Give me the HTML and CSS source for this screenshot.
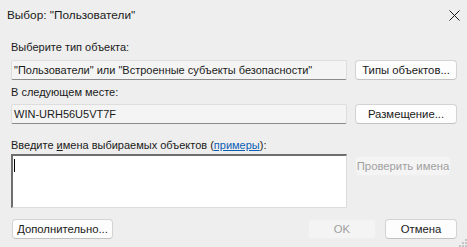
FILE: index.html
```html
<!DOCTYPE html>
<html lang="ru">
<head>
<meta charset="utf-8">
<title>Выбор: "Пользователи"</title>
<link rel="stylesheet" href="styles.css">
</head>
<body>
<div class="dialog">
  <div class="titlebar">
    <span class="title">Выбор: "Пользователи"</span>
    <svg class="close" width="11" height="11" viewBox="0 0 11 11"><path d="M0.5 0.5 L10.5 10.5 M10.5 0.5 L0.5 10.5" stroke="#1c1c1c" stroke-width="1" fill="none"/></svg>
  </div>
  <div class="content">
    <div class="label l1">Выберите тип объекта:</div>
    <div class="row r1">
      <div class="field">"Пользователи" или "Встроенные субъекты безопасности"</div>
      <button class="btn side">Типы объектов...</button>
    </div>
    <div class="label l2">В следующем месте:</div>
    <div class="row r2">
      <div class="field">WIN-URH56U5VT7F</div>
      <button class="btn side">Размещение...</button>
    </div>
    <div class="label l3">Введите <u>и</u>мена выбираемых объектов (<a class="link" href="#">примеры</a>):</div>
    <div class="row r3">
      <div class="textarea"><span class="caret"></span></div>
      <button class="btn side check disabled">Проверить имена</button>
    </div>
    <div class="footer">
      <button class="btn more">Дополнительно...</button>
      <div class="actions">
        <button class="btn ok disabled">OK</button>
        <button class="btn cancel">Отмена</button>
      </div>
    </div>
  </div>
  <svg class="grip" width="9" height="9" viewBox="0 0 9 9">
    <rect x="7" y="1" width="2" height="2" fill="#c4c4c4"/>
    <rect x="4" y="4" width="2" height="2" fill="#c4c4c4"/>
    <rect x="7" y="4" width="2" height="2" fill="#c4c4c4"/>
    <rect x="1" y="7" width="2" height="2" fill="#c4c4c4"/>
    <rect x="4" y="7" width="2" height="2" fill="#c4c4c4"/>
    <rect x="7" y="7" width="2" height="2" fill="#c4c4c4"/>
  </svg>
</div>
</body>
</html>
```
FILE: styles.css
```css
html, body {
  margin: 0;
  padding: 0;
  background: #eeeeee;
}
.dialog {
  position: relative;
  width: 467px;
  height: 247px;
  overflow: hidden;
  font-family: "Liberation Sans", Arial, sans-serif;
  color: #1a1a1a;
  display: flex;
  flex-direction: column;
}
.titlebar {
  height: 30px;
  display: flex;
  align-items: center;
  justify-content: space-between;
  padding: 0 7px 0 7px;
  box-sizing: border-box;
}
.title {
  font-size: 11.8px;
  color: #1a1a1a;
}
.close {
  display: block;
}
.content {
  padding: 0 10px 0 11px;
  display: flex;
  flex-direction: column;
}
.label {
  font-size: 11px;
  line-height: 14px;
  height: 14px;
  color: #1a1a1a;
  white-space: nowrap;
}
.l1 { margin-top: 10px; }
.l2 { margin-top: 5px; }
.l3 { margin-top: 14px; }
.row {
  display: flex;
  align-items: flex-start;
  gap: 8px;
}
.r1 { margin-top: 6px; }
.r2 { margin-top: 5px; }
.r3 { margin-top: 2px; }
.field {
  width: 336px;
  flex: none;
  height: 20px;
  box-sizing: border-box;
  background: #f4f4f4;
  border: 1px solid #dddddd;
  border-bottom-color: #8a8a8a;
  border-radius: 2px;
  font-size: 11px;
  line-height: 18px;
  padding-left: 2px;
  white-space: nowrap;
  overflow: hidden;
  color: #1a1a1a;
}
.btn {
  font-family: "Liberation Sans", Arial, sans-serif;
  font-size: 11.3px;
  color: #1a1a1a;
  background: #fdfdfd;
  border: 1px solid #d3d3d3;
  border-bottom-color: #c2c2c2;
  border-radius: 4px;
  height: 20px;
  box-sizing: border-box;
  padding: 0;
  margin: 0;
  white-space: nowrap;
}
.side {
  width: 102px;
  flex: none;
}
.btn.disabled {
  background: #f4f4f4;
  border-color: #efefef;
  color: #a0a0a0;
}
.r3 .check {
  margin-top: 2px;
  width: 96px;
}
.textarea {
  width: 336px;
  flex: none;
  height: 54px;
  box-sizing: border-box;
  background: #ffffff;
  border-top: 2px solid #6e6e6e;
  border-left: 2px solid #6e6e6e;
  border-right: 1px solid #dcdcdc;
  border-bottom: 1px solid #dcdcdc;
  position: relative;
}
.caret {
  position: absolute;
  left: 1px;
  top: 3px;
  width: 1px;
  height: 13px;
  background: #000;
}
.link {
  color: #0a5fb4;
  text-decoration: underline;
}
.footer {
  margin-top: 11px;
  display: flex;
  justify-content: space-between;
  align-items: center;
}
.more {
  width: 101px;
  margin-left: 1px;
}
.actions {
  display: flex;
  gap: 9px;
}
.ok { width: 68px; }
.cancel { width: 72px; }
.grip {
  position: absolute;
  right: 0;
  bottom: 0;
}
```
